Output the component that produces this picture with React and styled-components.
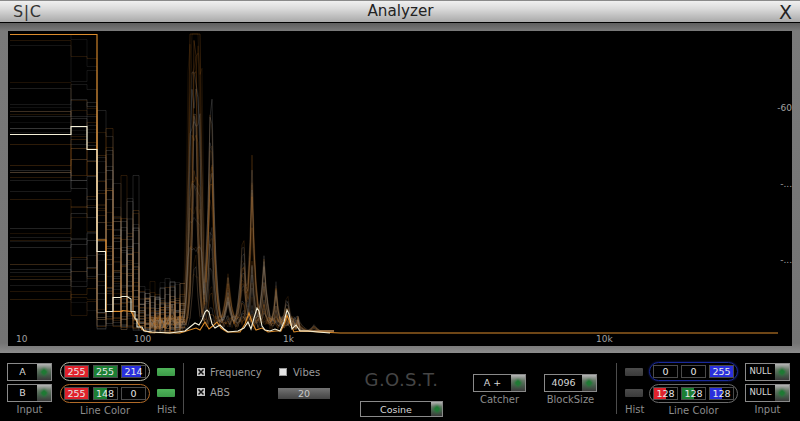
import React from 'react';
import styled, { createGlobalStyle } from 'styled-components';

const GlobalStyle = createGlobalStyle`
  html, body { margin: 0; padding: 0; background: #000; }
  body { font-family: "DejaVu Sans", Verdana, sans-serif; }
`;

// seeded, so the picture stays the same on every load
let seed = 1234;
function rnd() {
  seed = (seed * 16807) % 2147483647;
  return seed / 2147483647;
}

const BASE = 333;
const TOP = 34;
const STEP_EDGES = [10, 71, 87, 97, 106, 113, 121, 127, 133, 139, 145, 150, 155, 160, 165, 170, 175, 180, 185];
const PEAKS = [
  { x: 195, h: 400, w: 2.5, flat: 7 },
  { x: 211, h: 250, w: 3.5, flat: 1 },
  { x: 228, h: 68, w: 5, flat: 0 },
  { x: 243, h: 118, w: 4, flat: 0 },
  { x: 252, h: 180, w: 3.5, flat: 0 },
  { x: 264, h: 78, w: 4, flat: 0 },
  { x: 276, h: 58, w: 3.5, flat: 0 },
  { x: 287, h: 46, w: 4, flat: 0 },
  { x: 172, h: 32, w: 5, flat: 0 },
  { x: 300, h: 11, w: 6, flat: 0 },
  { x: 314, h: 9, w: 5, flat: 0 },
];

function stepTrace() {
  const floor = 40 + rnd() * 285;
  let d = '';
  STEP_EDGES.slice(0, -1).forEach((x0, i) => {
    const x1 = STEP_EDGES[i + 1];
    let y;
    if (i < 3) y = floor + (rnd() - 0.5) * 50;
    else if (i < 5) y = 60 + Math.sqrt(rnd()) * 270;
    else if (i < 9) y = 170 + Math.sqrt(rnd()) * 160;
    else y = 275 + Math.sqrt(rnd()) * 58;
    y = Math.round(Math.min(y, BASE)) + 0.5;
    d += `${i === 0 ? 'M' : 'L'}${x0} ${y}L${x1} ${y}`;
  });
  return d;
}

function peakTrace() {
  const gains = PEAKS.map(() => Math.pow(rnd(), 1.2));
  const narrow = rnd();
  let d = '';
  for (let x = 150; x < 335; x += 2) {
    let lift = x < 300 ? 3 + rnd() * 14 : 2;
    PEAKS.forEach((p, i) => {
      const dx = Math.max(0, Math.abs(x - p.x) - p.flat * narrow);
      lift = Math.max(lift, p.h * gains[i] * Math.exp(-dx / p.w));
    });
    lift *= 0.94 + rnd() * 0.12;
    const y = Math.max(TOP, BASE - lift);
    d += `${x === 150 ? 'M' : 'L'}${x} ${y.toFixed(1)}`;
  }
  return d;
}

const FAINT = [];
for (let i = 0; i < 40; i++) {
  FAINT.push({ d: stepTrace(), warm: rnd() < 0.25, alpha: 0.1 + rnd() * 0.16 });
}
for (let i = 0; i < 24; i++) {
  FAINT.push({ d: peakTrace(), warm: rnd() < 0.5, alpha: 0.12 + rnd() * 0.16 });
}

const WHITE_LINE =
  'M10 134.5L71 134.5L71 126.5L87 126.5L87 149.5L97 149.5L97 251.5L105.5 251.5L105.5 311.5L113 311.5L113 297.5L120 297.5L122 296.5L127 296.5L131 299L131 311.5L135 311.5L135 319L137 319L137 327L142 327L144 331L152 332L170 333L185 331L190 327L195 323L199 325L202 320L205 312L207 310L209 312L212 324L215 328L220 325L224 329L228 332L238 331L244 328L248 322L251 329L254 318L257 308L259 311L262 326L265 330L270 331L275 329L280 331L284 322L287 310L289 314L292 329L296 325L300 331L308 331L318 332L330 333';
const ORANGE_LINE =
  'M10 34.5L97 34.5L97 240L106 240L106 311.5L122 311.5L122 310.5L131 311.5L135 318.5L142 329.5L150 332.5L180 333L196 328L200 330L205 322L209 329L214 325L217 322L221 328L227 332L240 332L245 324L249 313L252 322L256 330L262 328L268 332L276 331L281 331L285 322L287 315L290 323L294 332L300 331L340 333L778 333';

const SWATCHES = ['#e0222c', '#1c7f34', '#2a30dc'];

function Dropdown({ text, wide, small }) {
  return (
    <DropBox $wide={wide}>
      <DropText $small={small}>{text}</DropText>
      <DropArrow $wide={wide}><Diamond /></DropArrow>
    </DropBox>
  );
}

function ColorRow({ ring, glow, values }) {
  return (
    <Pill $ring={ring} $glow={glow}>
      {values.map((v, i) => (
        <Swatch key={i} $color={SWATCHES[i]} $fill={(v / 255) * 100}>{v}</Swatch>
      ))}
    </Pill>
  );
}

function CrossMark() {
  return (
    <svg width="8" height="8" viewBox="0 0 8 8">
      <rect width="8" height="8" fill="#c8c8c8" />
      <path d="M1.5 1.5L6.5 6.5M6.5 1.5L1.5 6.5" stroke="#111" strokeWidth="1.5" />
    </svg>
  );
}

function Spectrum() {
  return (
    <Chart viewBox="8 31 784 315" width="784" height="315">
      {FAINT.map((t, i) => (
        <path
          key={i}
          d={t.d}
          fill="none"
          stroke={t.warm ? '#b86e20' : '#8c8c8c'}
          strokeOpacity={t.alpha}
          strokeWidth="1"
        />
      ))}
      <path d={ORANGE_LINE} fill="none" stroke="#dc8c2c" strokeWidth="1.1" />
      <path d={WHITE_LINE} fill="none" stroke="#f4f0d8" strokeWidth="1.1" />
    </Chart>
  );
}

export default function App() {
  return (
    <Page>
      <GlobalStyle />
      <TitleBar>
        <Logo>S|C</Logo>
        <Title>Analyzer</Title>
        <CloseMark>X</CloseMark>
      </TitleBar>
      <Frame>
        <Plot>
          <Spectrum />
          <FreqLabel $x={8}>10</FreqLabel>
          <FreqLabel $x={126}>100</FreqLabel>
          <FreqLabel $x={275}>1k</FreqLabel>
          <FreqLabel $x={588}>10k</FreqLabel>
          <DbLabel $y={72}>-60</DbLabel>
          <DbLabel $y={148}>-...</DbLabel>
          <DbLabel $y={224}>-...</DbLabel>
        </Plot>
      </Frame>
      <Panel>
        <Group $w={45}>
          <Dropdown text="A" />
          <Dropdown text="B" />
          <Caption>Input</Caption>
        </Group>
        <PillGroup $w={90} $ml={8}>
          <ColorRow ring="#b5b5a5" values={[255, 255, 214]} />
          <ColorRow ring="#b06a28" values={[255, 148, 0]} />
          <Caption>Line Color</Caption>
        </PillGroup>
        <Group $w={18} $ml={7}>
          <LedCell><Led $on /></LedCell>
          <LedCell><Led $on /></LedCell>
          <Caption>Hist</Caption>
        </Group>
        <Divider $ml={8} />
        <CheckColumn $ml={13} $w={65}>
          <CheckRow><CrossMark /><CheckText>Frequency</CheckText></CheckRow>
          <CheckRow><CrossMark /><CheckText>ABS</CheckText></CheckRow>
        </CheckColumn>
        <CheckColumn $ml={16} $w={52}>
          <CheckRow><PlainCheck /><CheckText>Vibes</CheckText></CheckRow>
          <Slider>20</Slider>
        </CheckColumn>
        <GostColumn>
          <Gost>G.O.S.T.</Gost>
          <Dropdown text="Cosine" wide />
        </GostColumn>
        <Group $w={53} $ml={30} $pt={11}>
          <Dropdown text="A +" />
          <Caption>Catcher</Caption>
        </Group>
        <Group $w={53} $ml={18} $pt={11}>
          <Dropdown text="4096" />
          <Caption>BlockSize</Caption>
        </Group>
        <Divider $ml={19} />
        <Group $w={18} $ml={8}>
          <LedCell><Led /></LedCell>
          <LedCell><Led /></LedCell>
          <Caption>Hist</Caption>
        </Group>
        <PillGroup $w={89} $ml={6}>
          <ColorRow ring="#1a2a9a" glow values={[0, 0, 255]} />
          <ColorRow ring="#6a6a6a" values={[128, 128, 128]} />
          <Caption>Line Color</Caption>
        </PillGroup>
        <Group $w={45} $ml={7}>
          <Dropdown text="NULL" small />
          <Dropdown text="NULL" small />
          <Caption>Input</Caption>
        </Group>
      </Panel>
    </Page>
  );
}

const Page = styled.div`
  width: 800px;
  height: 421px;
  overflow: hidden;
  background: #000;
  display: flex;
  flex-direction: column;
`;

const TitleBar = styled.header`
  height: 21px;
  padding: 0 8px 0 13px;
  display: flex;
  align-items: center;
  justify-content: space-between;
  border-top: 1px solid #8a8a8a;
  background: linear-gradient(#f0f0f0, #dcdcdc 35%, #a9a9a9);
  color: #1c1c1c;
`;

const Logo = styled.span`
  width: 60px;
  font-size: 16px;
  letter-spacing: 0.6px;
  color: #333;
`;

const Title = styled.span`
  font-size: 15.2px;
  line-height: 19px;
  margin-bottom: 1px;
  margin-left: -4px;
  color: #222;
`;

const CloseMark = styled.span`
  width: 60px;
  text-align: right;
  font-size: 19px;
  color: #222;
`;

const Frame = styled.div`
  margin-top: 1px;
  height: 330px;
  box-sizing: border-box;
  padding: 8px 8px 7px;
  background: linear-gradient(#5e5e5e, #7a7a7a 2.4%, #747474 97%, #8c8c8c);
`;

const Plot = styled.div`
  position: relative;
  width: 784px;
  height: 315px;
  background: #000;
  overflow: hidden;
`;

const Chart = styled.svg`
  display: block;
`;

const FreqLabel = styled.span`
  position: absolute;
  left: ${props => props.$x}px;
  bottom: 2px;
  font-size: 9px;
  color: #a0a0a0;
`;

const DbLabel = styled.span`
  position: absolute;
  right: 0;
  top: ${props => props.$y}px;
  font-size: 9px;
  color: #a0a0a0;
`;

const Panel = styled.div`
  flex: 1;
  display: flex;
  align-items: flex-start;
  padding: 10px 0 0 7px;
  background: #000;
`;

const Group = styled.div`
  width: ${props => props.$w}px;
  margin-left: ${props => props.$ml || 0}px;
  padding-top: ${props => props.$pt || 0}px;
  display: flex;
  flex-direction: column;
  gap: 3px;
  flex: none;
`;

const PillGroup = styled(Group)`
  margin-top: -1px;
`;

const Caption = styled.div`
  margin-top: -2px;
  text-align: center;
  white-space: nowrap;
  font-size: 10px;
  line-height: 14px;
  color: #8c8c8c;
`;

const DropBox = styled.div`
  height: ${props => (props.$wide ? 16 : 18)}px;
  box-sizing: border-box;
  display: flex;
  border: 1px solid #8a8a8a;
  background: #000;
`;

const DropText = styled.div`
  flex: 1;
  text-align: center;
  font-size: ${props => (props.$small ? 8.5 : 9.5)}px;
  line-height: 15px;
  color: #d8d8d8;
  white-space: nowrap;
`;

const DropArrow = styled.div`
  width: ${props => (props.$wide ? 11 : 14)}px;
  display: flex;
  align-items: center;
  justify-content: center;
  background: linear-gradient(#b4b4b4, #6a786a 35%, #46584a 70%, #3a3a3a);
`;

const Diamond = styled.span`
  width: 4px;
  height: 4px;
  background: #1f7a34;
  box-shadow: 0 0 3px 1px #1f7a34;
  transform: rotate(45deg);
`;

const Pill = styled.div`
  height: 19px;
  box-sizing: border-box;
  padding: 0 3px;
  display: flex;
  align-items: center;
  justify-content: space-between;
  border: 1px solid ${props => props.$ring};
  border-radius: 10px;
  box-shadow: ${props => (props.$glow ? '0 0 2px #1a2a9a' : 'none')};
`;

const Swatch = styled.div`
  width: 25px;
  height: 13px;
  box-sizing: border-box;
  border: 1px solid #4a4a4a;
  text-align: center;
  font-size: 9.5px;
  line-height: 11px;
  color: #e8e8e8;
  background: linear-gradient(
    to right,
    ${props => props.$color} ${props => props.$fill}%,
    #000 ${props => props.$fill}%
  );
`;

const LedCell = styled.div`
  height: 18px;
  display: flex;
  align-items: center;
`;

const Led = styled.div`
  width: 18px;
  height: 8px;
  border-radius: 1px;
  background: ${props => (props.$on
    ? 'linear-gradient(#4fb45a, #3c9a48)'
    : 'linear-gradient(#4c4c4c, #3a3a3a)')};
`;

const Divider = styled.div`
  width: 1px;
  height: 51px;
  margin-left: ${props => props.$ml}px;
  background: #4c4c4c;
  flex: none;
`;

const CheckColumn = styled.div`
  width: ${props => props.$w}px;
  margin-left: ${props => props.$ml}px;
  display: flex;
  flex-direction: column;
  gap: 4px;
  flex: none;
`;

const CheckRow = styled.div`
  height: 14px;
  margin-top: 2px;
  display: flex;
  align-items: center;
  gap: 5px;
`;

const CheckText = styled.span`
  font-size: 10px;
  color: #9a9a9a;
  white-space: nowrap;
`;

const PlainCheck = styled.span`
  width: 8px;
  height: 8px;
  margin: 0 1px;
  background: #e4e4e4;
  box-shadow: inset 0 0 0 1px #999;
`;

const Slider = styled.div`
  height: 11px;
  margin-top: 5px;
  text-align: center;
  font-size: 9.5px;
  line-height: 11px;
  color: #c8c8c8;
  background: linear-gradient(#747474, #585858 55%, #444);
`;

const GostColumn = styled.div`
  width: 83px;
  margin-left: 30px;
  flex: none;
  display: flex;
  flex-direction: column;
  gap: 8px;
`;

const Gost = styled.div`
  margin-top: 4px;
  height: 26px;
  text-align: center;
  white-space: nowrap;
  font-size: 18px;
  line-height: 26px;
  letter-spacing: 0.4px;
  color: #454545;
`;
